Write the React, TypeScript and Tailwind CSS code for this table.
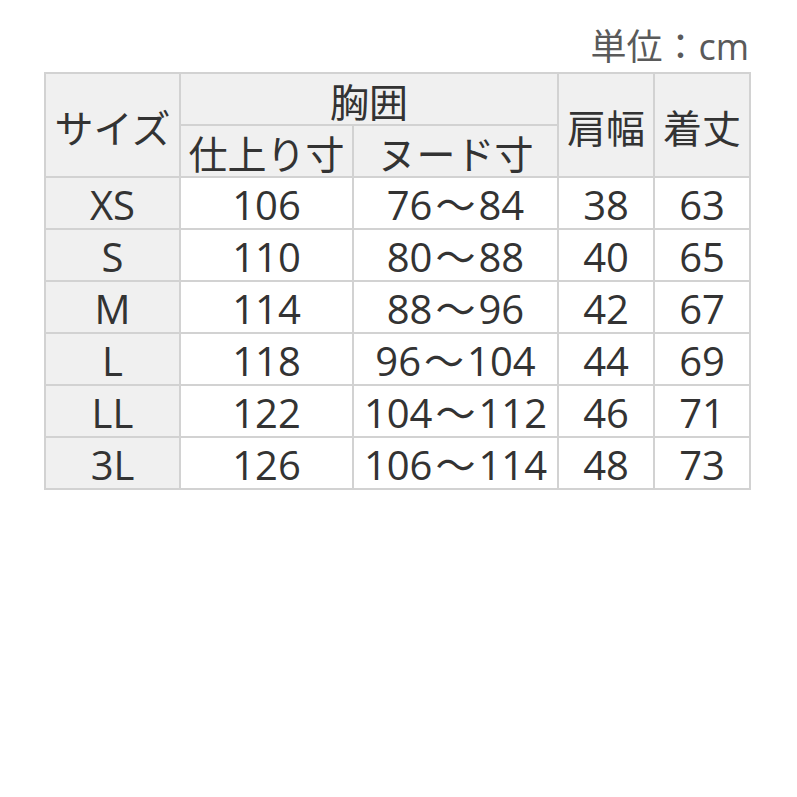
import React from "react";

const rows = [
  ["XS", "106", "76〜84", "38", "63"],
  ["S", "110", "80〜88", "40", "65"],
  ["M", "114", "88〜96", "42", "67"],
  ["L", "118", "96〜104", "44", "69"],
  ["LL", "122", "104〜112", "46", "71"],
  ["3L", "126", "106〜114", "48", "73"],
];

function Cell({ text }: { text: string }) {
  const parts = text.split("〜");
  if (parts.length === 2) {
    return (
      <span>
        {parts[0]}
        <span className="mx-[3px]">〜</span>
        {parts[1]}
      </span>
    );
  }
  return <span>{text}</span>;
}

export default function App() {
  const font = { fontFamily: '"Open Sans", "Noto Sans CJK JP", sans-serif' };
  return (
    <div className="w-[797px] h-[797px] bg-white text-[#333]" style={font}>
      <div className="ml-[44px] w-[707px]">
        <div className="h-[72px] flex items-end justify-end pr-[2px] text-[36px] leading-[50px] text-[#5a5a5a]">
          単位：cm
        </div>
        <div className="grid grid-cols-[133px_171px_203px_94px_94px] grid-rows-[repeat(8,50px)] gap-[2px] p-[2px] bg-[#d2d2d2] text-[39px] leading-none">
          <div className="row-span-2 bg-[#f0f0f0] flex items-center justify-center pt-[4px]">サイズ</div>
          <div className="col-span-2 bg-[#f0f0f0] flex items-center justify-center pt-[4px]">胸囲</div>
          <div className="row-span-2 bg-[#f0f0f0] flex items-center justify-center pt-[4px]">肩幅</div>
          <div className="row-span-2 bg-[#f0f0f0] flex items-center justify-center pt-[4px]">着丈</div>
          <div className="bg-[#f0f0f0] flex items-center justify-center pt-[4px]">仕上り寸</div>
          <div className="bg-[#f0f0f0] flex items-center justify-center pt-[4px]">ヌード寸</div>
          {rows.map((r) =>
            r.map((c, i) => (
              <div
                key={r[0] + i}
                className={
                  (i === 0 ? "bg-[#f0f0f0]" : "bg-white") +
                  " flex items-center justify-center pt-[4px] text-[40px]"
                }
              >
                <Cell text={c} />
              </div>
            ))
          )}
        </div>
      </div>
    </div>
  );
}
